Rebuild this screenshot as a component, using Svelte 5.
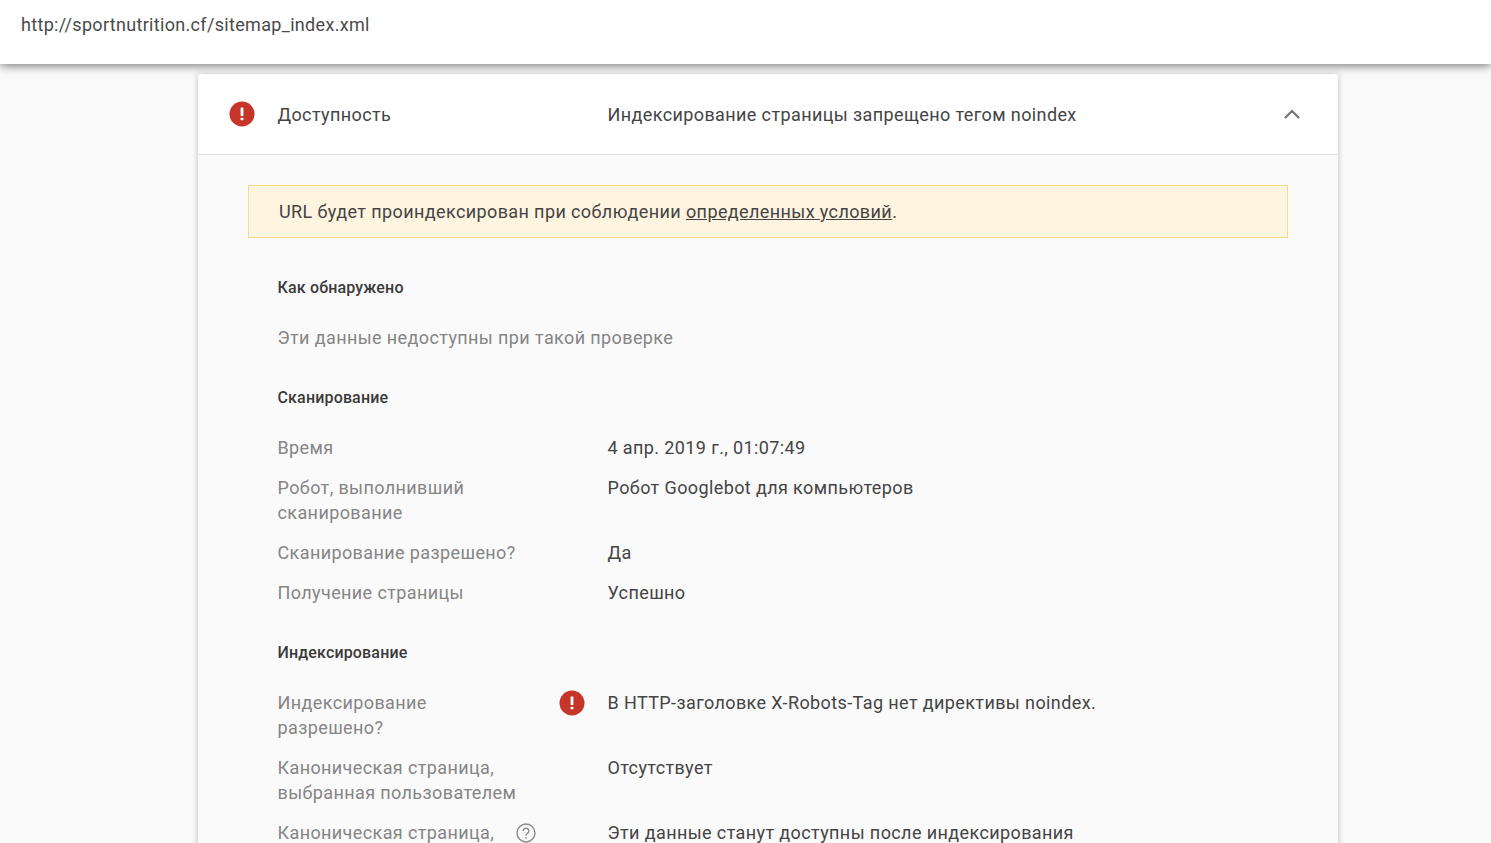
<script>
  const crawl = [
    { label: 'Время', value: '4 апр. 2019 г., 01:07:49' },
    { label: 'Робот, выполнивший сканирование', value: 'Робот Googlebot для компьютеров' },
    { label: 'Сканирование разрешено?', value: 'Да' },
    { label: 'Получение страницы', value: 'Успешно' }
  ];
  const index = [
    { label: 'Индексирование разрешено?', value: 'В HTTP-заголовке X-Robots-Tag нет директивы noindex.', mark: 'error' },
    { label: 'Каноническая страница, выбранная пользователем', value: 'Отсутствует' },
    { label: 'Каноническая страница, выбранная Google', value: 'Эти данные станут доступны после индексирования', mark: 'help' }
  ];
</script>

{#snippet errorIcon()}
  <svg class="err" viewBox="0 0 26 26" width="26" height="26" aria-hidden="true">
    <circle cx="13" cy="13" r="12.5" fill="#c5352a" />
    <rect x="11.6" y="6.5" width="2.8" height="8.5" rx="0.6" fill="#fff" />
    <rect x="11.6" y="16.7" width="2.8" height="2.6" rx="0.6" fill="#fff" />
  </svg>
{/snippet}

{#snippet rows(items)}
  {#each items as row}
    <div class="row">
      <div class="label">
        <span class="label-text">{row.label}</span>
        {#if row.mark === 'error'}
          <span class="mark">{@render errorIcon()}</span>
        {:else if row.mark === 'help'}
          <svg class="help" viewBox="0 0 20 20" width="20" height="20" aria-hidden="true">
            <circle cx="10" cy="10" r="9" fill="none" stroke="#8a8a8a" stroke-width="1.4" />
            <path d="M7.2 8a2.8 2.8 0 1 1 4.6 2.1c-.9.8-1.8 1.2-1.8 2.6" fill="none" stroke="#8a8a8a" stroke-width="1.4" />
            <rect x="9.3" y="14" width="1.4" height="1.6" fill="#8a8a8a" />
          </svg>
        {/if}
      </div>
      <div class="value">{row.value}</div>
    </div>
  {/each}
{/snippet}

<div class="page">
  <header class="topbar">http://sportnutrition.cf/sitemap_index.xml</header>
  <main class="card">
    <div class="card-head">
      <span class="head-icon">{@render errorIcon()}</span>
      <span class="head-title">Доступность</span>
      <span class="head-summary">Индексирование страницы запрещено тегом noindex</span>
      <svg class="chevron" viewBox="0 0 16 10" width="16" height="10" aria-hidden="true">
        <path d="M1 9 L8 2 L15 9" fill="none" stroke="#757575" stroke-width="2.2" />
      </svg>
    </div>
    <div class="card-body">
      <div class="banner">URL будет проиндексирован при соблюдении <a href="#conditions">определенных условий</a>.</div>
      <h3 class="first">Как обнаружено</h3>
      <p class="muted">Эти данные недоступны при такой проверке</p>
      <h3>Сканирование</h3>
      {@render rows(crawl)}
      <h3>Индексирование</h3>
      {@render rows(index)}
    </div>
  </main>
</div>

<style>
  :global(body) {
    margin: 0;
    background: #fafafa;
  }
  .page {
    height: 100vh;
    overflow: hidden;
    background: #fafafa;
    font-family: Roboto, "Liberation Sans", sans-serif;
    font-size: 18px;
    line-height: 25px;
    letter-spacing: 0.39px;
    color: #212121;
  }
  .topbar {
    position: relative;
    z-index: 2;
    box-sizing: border-box;
    height: 64px;
    padding: 12px 21px 0;
    background: #fff;
    color: #4a4a4a;
    letter-spacing: 0.32px;
    box-shadow: 0 2px 9px rgba(0, 0, 0, 0.5);
  }
  .card {
    box-sizing: border-box;
    width: 1140px;
    margin: 10px 0 0 198px;
    padding-bottom: 60px;
    background: #fafafa;
    border-radius: 3px 3px 0 0;
    box-shadow: 0 1px 6px rgba(0, 0, 0, 0.25);
  }
  .card-head {
    box-sizing: border-box;
    height: 81px;
    display: flex;
    align-items: center;
    padding-left: 31px;
    background: #fff;
    border-bottom: 1px solid #e0e0e0;
    border-radius: 3px 3px 0 0;
    color: #444;
  }
  .head-icon {
    display: flex;
    width: 48.5px;
  }
  .head-title {
    width: 330px;
  }
  .head-summary {
    flex: 1;
  }
  .chevron {
    margin: 0 38px 1px 0;
  }
  .card-body {
    padding: 30px 50px 0;
  }
  .banner {
    box-sizing: border-box;
    height: 53px;
    padding: 13px 30px;
    background: #fff4df;
    border: 1px solid #f9d888;
    color: #444;
  }
  .banner a {
    color: inherit;
    text-decoration: underline;
  }
  h3 {
    margin: 38px 0 27px 29.5px;
    font-size: 16px;
    line-height: 20px;
    font-weight: 500;
    letter-spacing: 0.16px;
    color: #3a3a3a;
  }
  h3.first {
    margin-top: 40px;
  }
  .muted {
    margin: 0 0 0 29.5px;
    color: #858585;
  }
  .row {
    display: flex;
    margin: 0 0 15px 29.5px;
  }
  .label {
    display: flex;
    align-items: flex-start;
    justify-content: space-between;
    width: 330px;
    padding-right: 60px;
    box-sizing: border-box;
    color: #858585;
    position: relative;
  }
  .label-text {
    width: 240px;
  }
  .mark {
    position: absolute;
    left: 281.5px;
    top: 0;
    display: flex;
  }
  .help {
    position: absolute;
    left: 238.5px;
    top: 3px;
  }
  .value {
    flex: 1;
    color: #444;
  }
</style>
